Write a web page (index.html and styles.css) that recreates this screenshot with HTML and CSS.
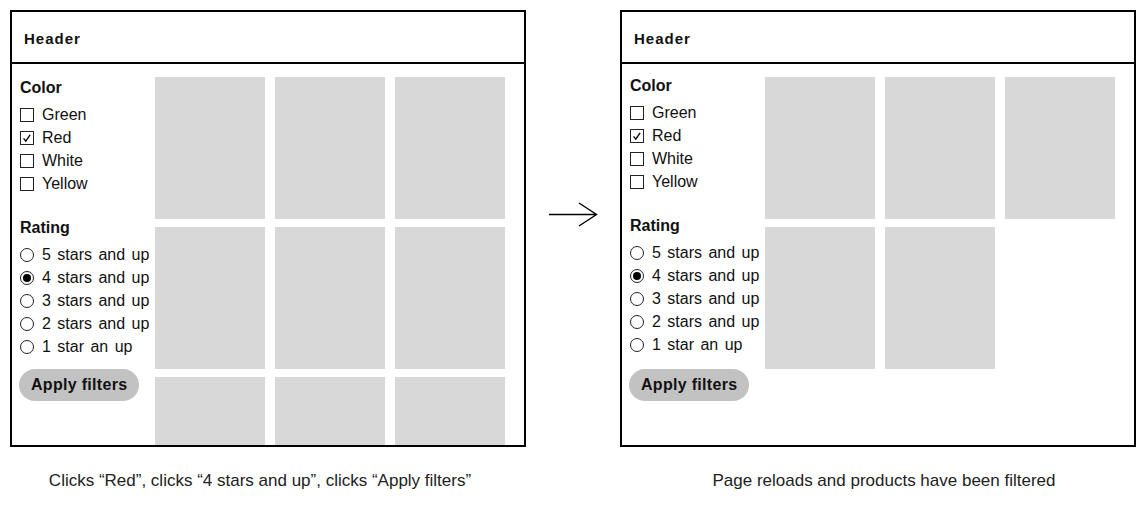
FILE: index.html
```html
<!DOCTYPE html>
<html>
<head>
    <title>Filter flow</title>
    <link rel="stylesheet" href="styles.css">
</head>
<body>

<div class="flow">
    <div class="screens">
        <div class="page">
            <div class="page-header">Header</div>
            <div class="page-body">
                <form class="filters">
                    <div class="filter-title">Color</div>
                    <div class="option"><span class="check"></span>Green</div>
                    <div class="option"><span class="check checked"><svg viewBox="0 0 14 14"><path d="M3 7.5 L5.6 10.6 L10.6 3.4"/></svg></span>Red</div>
                    <div class="option"><span class="check"></span>White</div>
                    <div class="option"><span class="check"></span>Yellow</div>

                    <div class="filter-title gap">Rating</div>
                    <div class="option"><span class="radio"></span>5 stars and up</div>
                    <div class="option"><span class="radio selected"></span>4 stars and up</div>
                    <div class="option"><span class="radio"></span>3 stars and up</div>
                    <div class="option"><span class="radio"></span>2 stars and up</div>
                    <div class="option"><span class="radio"></span>1 star an up</div>

                    <button type="button" class="apply">Apply filters</button>
                </form>
                <div class="products">
                    <div class="product"></div>
                    <div class="product"></div>
                    <div class="product"></div>
                    <div class="product"></div>
                    <div class="product"></div>
                    <div class="product"></div>
                    <div class="product"></div>
                    <div class="product"></div>
                    <div class="product"></div>
                </div>
            </div>
        </div>

        <div class="arrow">
            <svg width="50" height="26" viewBox="0 0 50 26">
                <path d="M1 12.5 H48.5 M31 1 L48.5 12.5 L31 24"/>
            </svg>
        </div>

        <div class="page">
            <div class="page-header">Header</div>
            <div class="page-body">
                <form class="filters filters-after">
                    <div class="filter-title">Color</div>
                    <div class="option"><span class="check"></span>Green</div>
                    <div class="option"><span class="check checked"><svg viewBox="0 0 14 14"><path d="M3 7.5 L5.6 10.6 L10.6 3.4"/></svg></span>Red</div>
                    <div class="option"><span class="check"></span>White</div>
                    <div class="option"><span class="check"></span>Yellow</div>

                    <div class="filter-title gap">Rating</div>
                    <div class="option"><span class="radio"></span>5 stars and up</div>
                    <div class="option"><span class="radio selected"></span>4 stars and up</div>
                    <div class="option"><span class="radio"></span>3 stars and up</div>
                    <div class="option"><span class="radio"></span>2 stars and up</div>
                    <div class="option"><span class="radio"></span>1 star an up</div>

                    <button type="button" class="apply">Apply filters</button>
                </form>
                <div class="products">
                    <div class="product"></div>
                    <div class="product"></div>
                    <div class="product"></div>
                    <div class="product"></div>
                    <div class="product"></div>
                </div>
            </div>
        </div>
    </div>

    <div class="captions">
        <p class="caption">Clicks “Red”, clicks “4 stars and up”, clicks “Apply filters”</p>
        <div></div>
        <p class="caption">Page reloads and products have been filtered</p>
    </div>
</div>

</body>
</html>
```

FILE: styles.css
```css
body {
    margin: 0;
    background: #fff;
    color: #111;
    font-family: "Liberation Sans", Arial, sans-serif;
}

.flow {
    width: 1148px;
}

.screens {
    display: flex;
    padding: 10px 0 0 10px;
}

.page {
    width: 516px;
    height: 437px;
    box-sizing: border-box; /* border counts in the frame size */
    border: 2px solid #000;
    display: flex;
    flex-direction: column;
    overflow: hidden;
}

.page-header {
    height: 52px;
    box-sizing: border-box;
    padding: 4px 12px 0;
    line-height: 46px;
    border-bottom: 2px solid #000;
    font-size: 15px;
    font-weight: bold;
    letter-spacing: 1px;
    flex-shrink: 0;
}

.page-body {
    display: flex;
    padding-top: 13px;
    min-height: 0;
    flex: 1;
}

.filters {
    width: 135px;
    flex-shrink: 0;
    margin: 0;
    padding: 1px 0 0 8px;
    font-size: 16px;
}

.filters-after {
    padding-top: 0;
    margin-top: -1px;
}

.filter-title {
    font-weight: bold;
    line-height: 20px;
    margin-bottom: 5px;
}

.filter-title.gap {
    margin-top: 23px;
}

.option {
    display: flex;
    align-items: center;
    height: 23px;
    line-height: 23px;
    word-spacing: 2px;
    white-space: nowrap;
}

.check, .radio {
    width: 14px;
    height: 14px;
    box-sizing: border-box;
    border: 1px solid #222;
    margin-right: 8px;
    flex-shrink: 0;
    display: flex;
    align-items: center;
    justify-content: center;
}

.check svg {
    width: 12px;
    height: 12px;
    fill: none;
    stroke: #000;
    stroke-width: 1.6;
}

.radio {
    border-radius: 50%;
}

.radio.selected::after {
    content: "";
    width: 8px;
    height: 8px;
    border-radius: 50%;
    background: #000;
}

.apply {
    margin: 11px 0 0 -1px;
    height: 32px;
    padding: 0 12px;
    border: none;
    border-radius: 16px;
    background-color: #c2c2c2;
    color: #111;
    font-family: inherit;
    font-size: 16px;
    font-weight: bold;
    letter-spacing: 0.3px;
}

.filters-after .apply {
    margin-top: 13px;
}

.products {
    display: grid;
    grid-template-columns: repeat(3, 110px);
    grid-auto-rows: 142px;
    column-gap: 10px;
    row-gap: 8px;
    align-content: start;
}

.product {
    background-color: #d8d8d8;
}

.arrow {
    width: 94px;
    box-sizing: border-box;
    padding: 192px 0 0 22px;
}

.arrow svg {
    display: block;
    fill: none;
    stroke: #000;
    stroke-width: 1.4;
}

.captions {
    display: grid;
    grid-template-columns: 520px 100px 1fr;
    margin-top: 24px;
}

.caption {
    margin: 0;
    text-align: center;
    font-size: 17px;
    line-height: 20px;
    color: #222;
}
```
